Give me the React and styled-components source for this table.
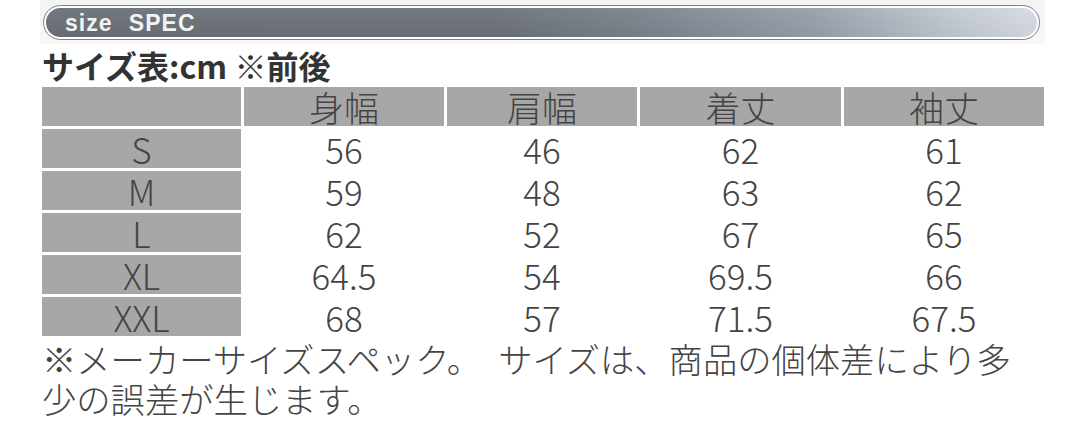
import React from 'react';
import styled, { createGlobalStyle } from 'styled-components';

const GlobalStyle = createGlobalStyle`
  html, body {
    margin: 0;
    padding: 0;
    background: #ffffff;
  }
  body {
    font-family: "Noto Sans CJK JP", "Liberation Sans", sans-serif;
    color: #444;
  }
`;

const sizes = [
  { name: 'S', values: ['56', '46', '62', '61'] },
  { name: 'M', values: ['59', '48', '63', '62'] },
  { name: 'L', values: ['62', '52', '67', '65'] },
  { name: 'XL', values: ['64.5', '54', '69.5', '66'] },
  { name: 'XXL', values: ['68', '57', '71.5', '67.5'] },
];

const headers = ['身幅', '肩幅', '着丈', '袖丈'];

const Page = styled.div`
  width: 1005px;
  margin-left: 40px;
`;

const BannerPanel = styled.div`
  height: 44px;
  box-sizing: border-box;
  padding: 5px 5px 4px 3px;
  background: linear-gradient(to bottom, #f4f4f4, #f7f7f7);
`;

const Pill = styled.div`
  height: 35px;
  box-sizing: border-box;
  border-radius: 18px;
  border: 1.5px solid #7c8187;
  padding: 2px;
  background: #ffffff;
  display: flex;
`;

const PillFill = styled.div`
  flex: 1;
  border-radius: 15px;
  display: flex;
  align-items: center;
  padding-left: 19px;
  background:
    linear-gradient(to bottom, rgba(255, 255, 255, 0.06), rgba(0, 0, 0, 0.04)),
    linear-gradient(to right, #6a7076 0%, #6b7177 45%, #7a828c 60%, #97a0ab 78%, #c3c9d2 92%, #d6dbe3 100%);
`;

const BannerText = styled.span`
  font-family: "Liberation Sans", Arial, sans-serif;
  font-weight: 700;
  font-size: 23px;
  letter-spacing: 1px;
  word-spacing: 9px;
  color: #f2f3f4;
  line-height: 1;
  margin-top: 2px;
`;

const Title = styled.h2`
  margin: 0;
  padding-left: 2px;
  height: 43px;
  line-height: 43px;
  font-size: 32px;
  font-weight: 700;
  color: #333;
  white-space: nowrap;
`;

const Table = styled.div`
  display: grid;
  grid-template-columns: 199px 200px 190px 201px 200px;
  grid-auto-rows: 39px;
  gap: 3px;
  margin-left: 2px;
`;

const Cell = styled.div`
  display: flex;
  align-items: center;
  justify-content: center;
  font-size: 35px;
  font-weight: 300;
  line-height: 39px;
  color: #444;
  background: ${(p) => (p.$shaded ? '#a7a7a7' : '#ffffff')};
`;

const Note = styled.p`
  margin: 2px 0 0 2px;
  font-size: 34.3px;
  font-weight: 300;
  line-height: 40px;
  color: #444;
  white-space: nowrap;
`;

export default function App() {
  return (
    <>
      <GlobalStyle />
      <Page>
        <BannerPanel>
          <Pill>
            <PillFill>
              <BannerText>size SPEC</BannerText>
            </PillFill>
          </Pill>
        </BannerPanel>
        <Title>サイズ表:cm ※前後</Title>
        <Table>
          <Cell $shaded />
          {headers.map((h) => (
            <Cell $shaded key={h}>{h}</Cell>
          ))}
          {sizes.map((row) => (
            <React.Fragment key={row.name}>
              <Cell $shaded>{row.name}</Cell>
              {row.values.map((v, i) => (
                <Cell key={i}>{v}</Cell>
              ))}
            </React.Fragment>
          ))}
        </Table>
        <Note>
          ※メーカーサイズスペック。　サイズは、商品の個体差により多
          <br />
          少の誤差が生じます。
        </Note>
      </Page>
    </>
  );
}
